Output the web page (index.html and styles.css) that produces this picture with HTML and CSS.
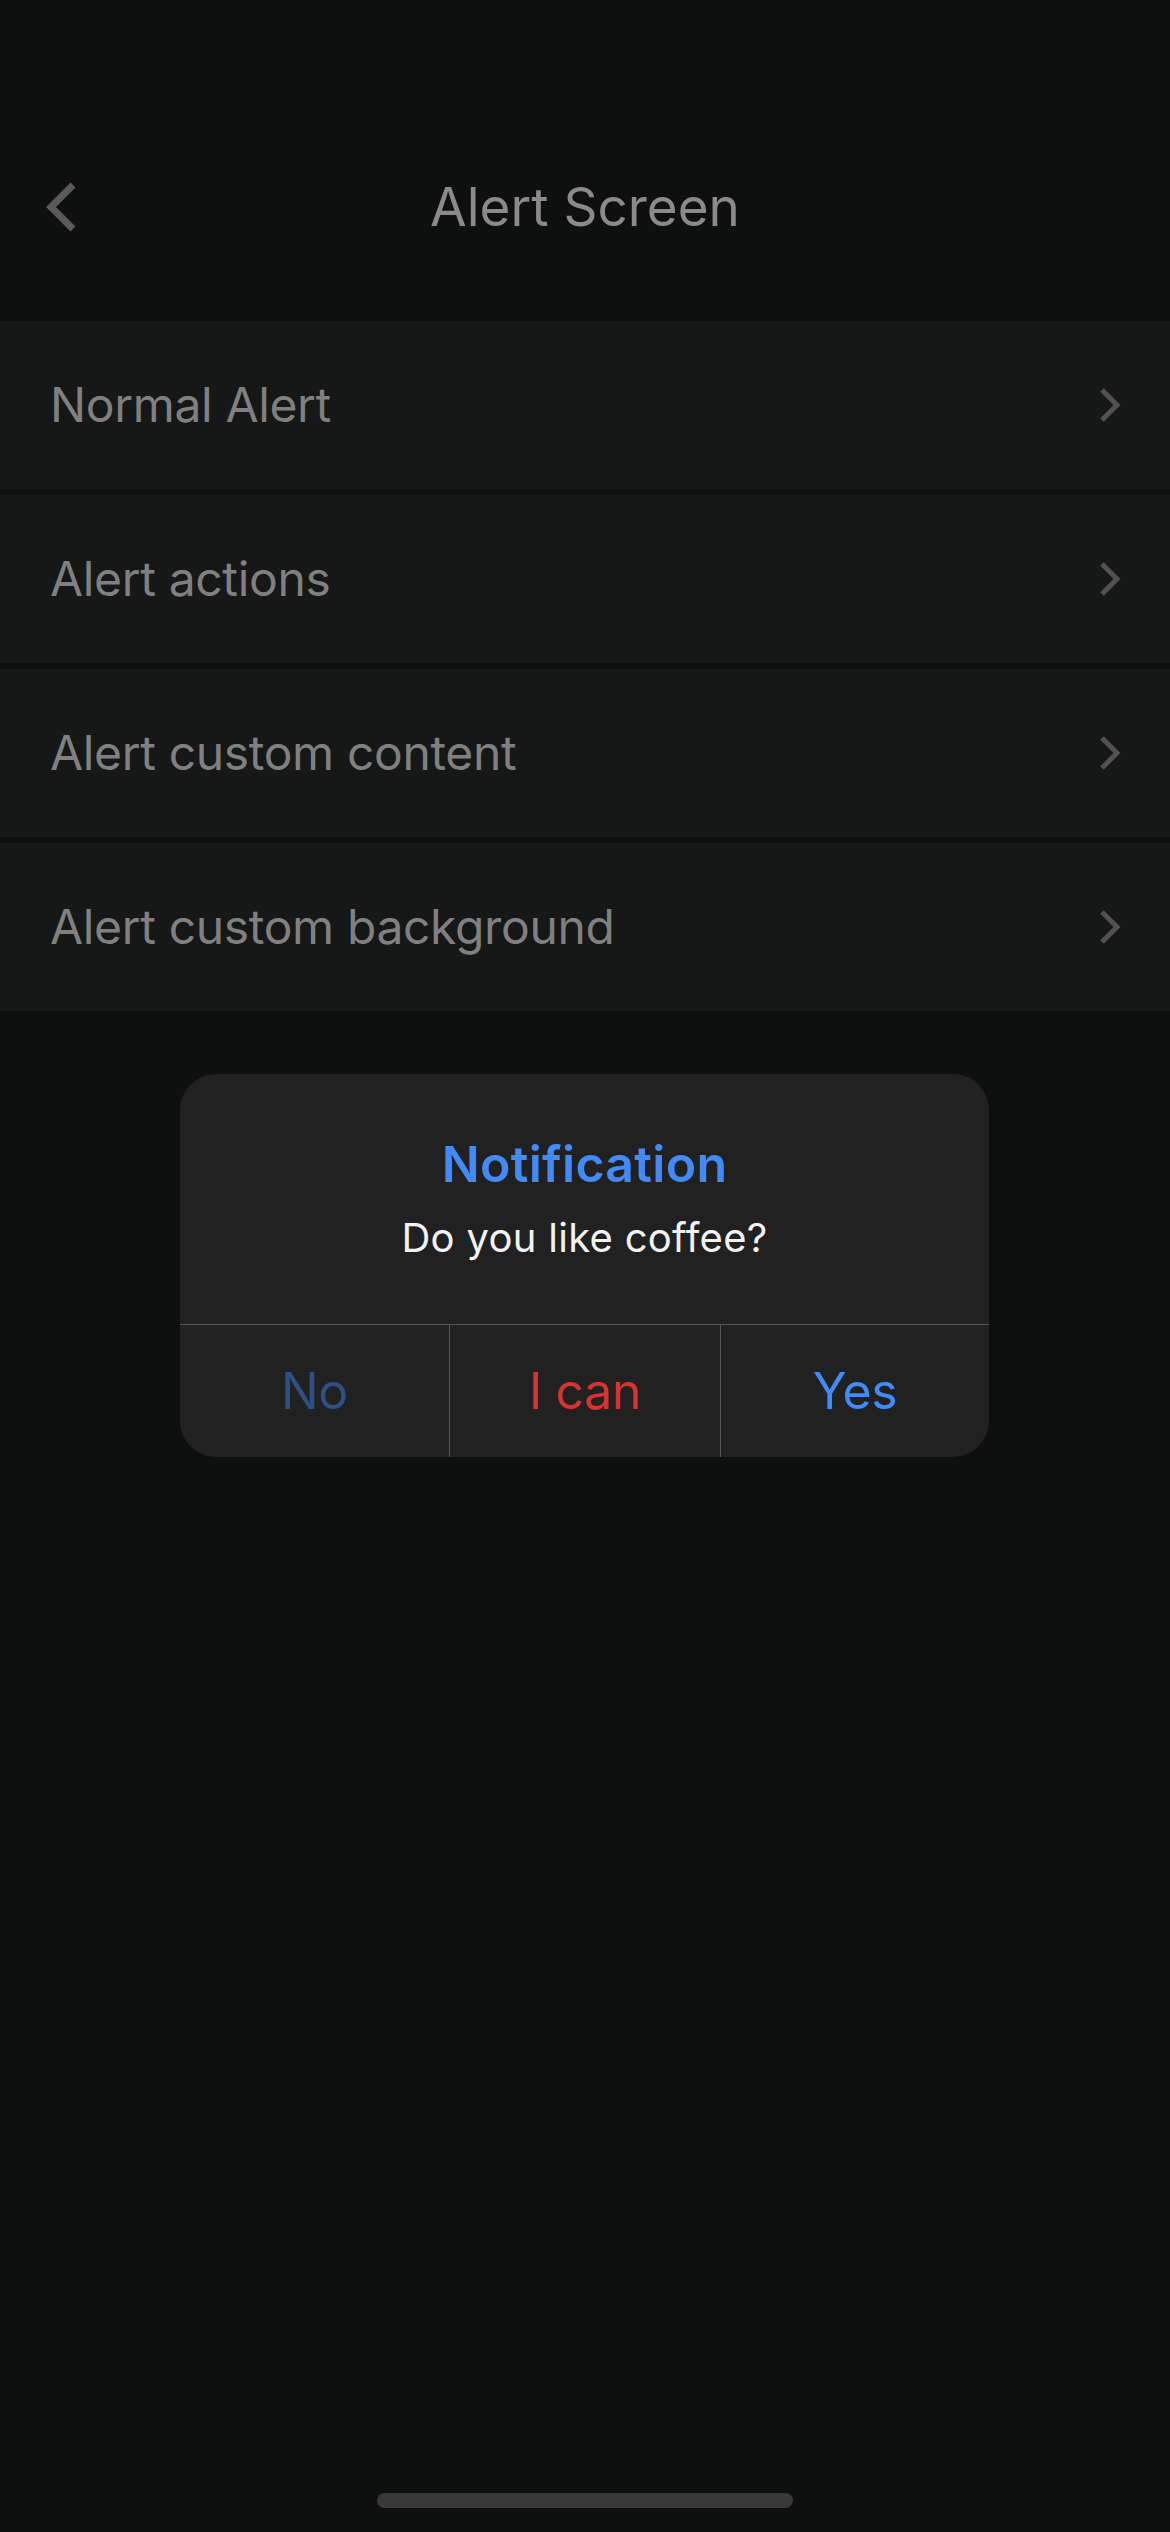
FILE: index.html
```html
<!DOCTYPE html>
<html lang="en">
<head>
<meta charset="utf-8">
<title>Alert Screen</title>
<link rel="stylesheet" href="styles.css">
</head>
<body>
<div class="screen">
  <header class="header">
    <div class="navbar">
      <svg class="back" width="44" height="60" viewBox="0 0 44 60" aria-hidden="true">
        <polyline points="33,8 11,30 33,52" fill="none" stroke="#5a5a5a" stroke-width="7" stroke-linejoin="miter"/>
      </svg>
      <h1 class="title">Alert Screen</h1>
    </div>
  </header>

  <ul class="list">
    <li class="row"><span class="row-label">Normal Alert</span>
      <svg class="chev" width="24" height="40" viewBox="0 0 24 40" aria-hidden="true"><polyline points="5,5 20,20 5,35" fill="none" stroke="#525252" stroke-width="5"/></svg></li>
    <li class="row"><span class="row-label">Alert actions</span>
      <svg class="chev" width="24" height="40" viewBox="0 0 24 40" aria-hidden="true"><polyline points="5,5 20,20 5,35" fill="none" stroke="#525252" stroke-width="5"/></svg></li>
    <li class="row"><span class="row-label">Alert custom content</span>
      <svg class="chev" width="24" height="40" viewBox="0 0 24 40" aria-hidden="true"><polyline points="5,5 20,20 5,35" fill="none" stroke="#525252" stroke-width="5"/></svg></li>
    <li class="row"><span class="row-label">Alert custom background</span>
      <svg class="chev" width="24" height="40" viewBox="0 0 24 40" aria-hidden="true"><polyline points="5,5 20,20 5,35" fill="none" stroke="#525252" stroke-width="5"/></svg></li>
  </ul>

  <div class="alert" role="alertdialog">
    <div class="alert-body">
      <div class="alert-title">Notification</div>
      <div class="alert-msg">Do you like coffee?</div>
    </div>
    <div class="alert-actions">
      <button class="action action-no">No</button>
      <button class="action action-can">I can</button>
      <button class="action action-yes">Yes</button>
    </div>
  </div>

  <div class="home-indicator"></div>
</div>
</body>
</html>
```

FILE: styles.css
```css
* { box-sizing: border-box; }

html, body {
  margin: 0;
  padding: 0;
  background: #0e1010;
}

body {
  font-family: Inter, "Noto Sans", "Liberation Sans", sans-serif;
  -webkit-font-smoothing: antialiased;
}

.screen {
  width: 1170px;
  min-height: 2532px;
  display: flex;
  flex-direction: column;
  background: #0e1010;
}

.header {
  height: 321px;
  padding-top: 140px;
}

.navbar {
  position: relative;
  height: 134px;
  display: flex;
  align-items: center;
  justify-content: center;
}

.back {
  position: absolute;
  left: 40px;
  top: 37px;
}

.title {
  margin: 0;
  font-size: 53px;
  font-weight: 400;
  line-height: 62px;
  color: #8a8a8a;
  letter-spacing: 0;
}

.list {
  list-style: none;
  margin: 0;
  padding: 0;
  display: flex;
  flex-direction: column;
  gap: 6px;
}

.row {
  height: 168px;
  background: #161717;
  display: flex;
  align-items: center;
  justify-content: space-between;
  padding: 0 49px 0 50px;
}

.row-label {
  font-size: 48px;
  line-height: 58px;
  color: #808080;
  letter-spacing: -0.35px;
}

.chev { display: block; }

.alert {
  margin: 63px 0 0 180px;
  width: 809px;
  background: #212121;
  border-radius: 36px;
  overflow: hidden;
}

.alert-body {
  padding: 60px 20px 62px;
  text-align: center;
}

.alert-title {
  font-size: 50px;
  line-height: 60px;
  font-weight: 600;
  color: #418af7;
  letter-spacing: 0.3px;
}

.alert-msg {
  margin-top: 20px;
  font-size: 40px;
  line-height: 48px;
  color: #f2f2f2;
  letter-spacing: 0.3px;
}

.alert-actions {
  display: grid;
  grid-template-columns: 269px 271px 269px;
  border-top: 1px solid #575757;
  height: 133px;
}

.action {
  font-family: inherit;
  font-size: 50px;
  line-height: 60px;
  background: transparent;
  border: 0;
  padding: 0;
  margin: 0;
  display: flex;
  align-items: center;
  justify-content: center;
  letter-spacing: -0.4px;
}

.action + .action {
  border-left: 1px solid #575757;
}

.action-no { color: #2f5085; }
.action-can { color: #d63333; }
.action-yes { color: #418af7; }

.home-indicator {
  margin: auto auto 24px;
  width: 416px;
  height: 15px;
  border-radius: 8px;
  background: #383838;
}
```
